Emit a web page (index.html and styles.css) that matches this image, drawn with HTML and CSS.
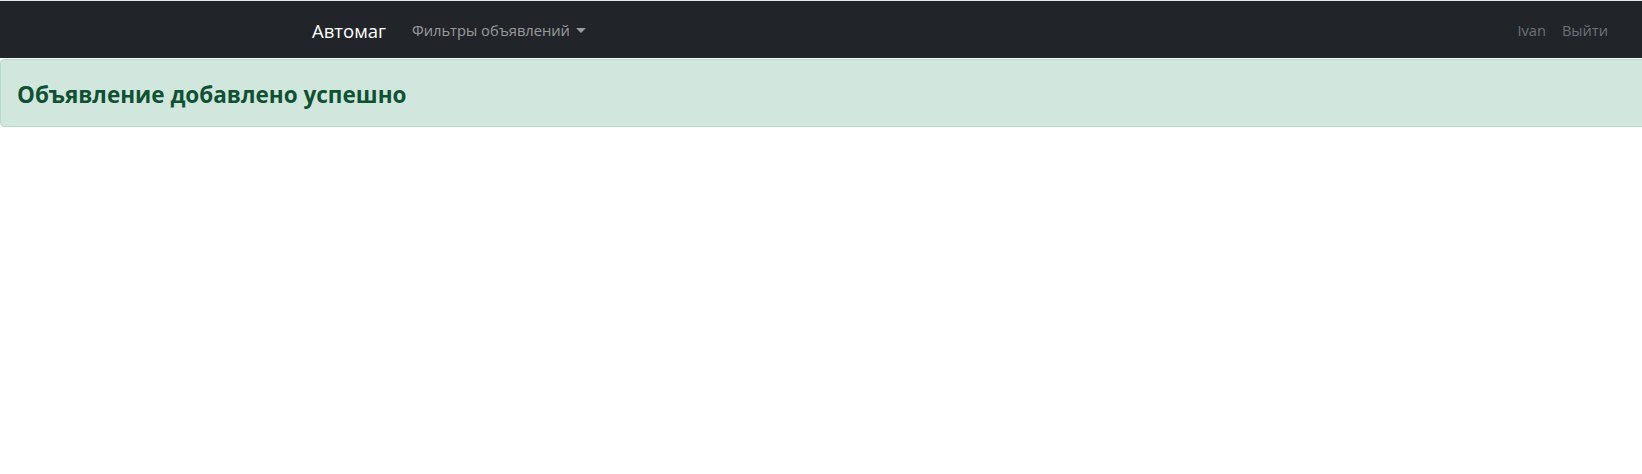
FILE: index.html
```html
<!DOCTYPE html>
<html lang="ru">
<head>
<meta charset="utf-8">
<title>Автомаг</title>
<link rel="stylesheet" href="styles.css">
</head>
<body>
<nav class="navbar">
  <div class="nav-left">
    <a class="brand" href="#">Автомаг</a>
    <a class="nav-link dropdown" href="#">Фильтры объявлений<span class="caret"></span></a>
  </div>
  <div class="nav-right">
    <span class="user">Ivan</span>
    <a class="user" href="#">Выйти</a>
  </div>
</nav>
<div class="alert">
  <h4 class="alert-heading">Объявление добавлено успешно</h4>
</div>
</body>
</html>
```
FILE: styles.css
```css
html, body {
  margin: 0;
  padding: 0;
  overflow: hidden;
  background: #fff;
}
body {
  font-family: "Open Sans", "Noto Sans", "Liberation Sans", sans-serif;
  border-top: 1px solid #e4e6e8;
}
a { text-decoration: none; }
.navbar {
  background: #212529;
  height: 57px;
  display: flex;
  align-items: center;
  justify-content: space-between;
  padding: 1px 34px 0 312px;
  box-sizing: border-box;
}
.nav-left, .nav-right {
  display: flex;
  align-items: center;
}
.brand {
  color: #fff;
  font-size: 18.5px;
  margin-right: 26px;
}
.nav-link {
  color: rgba(255,255,255,0.55);
  font-size: 14.7px;
  display: flex;
  align-items: center;
}
.caret {
  display: inline-block;
  width: 0;
  height: 0;
  margin-left: 6px;
  border-top: 5px solid rgba(255,255,255,0.55);
  border-left: 5px solid transparent;
  border-right: 5px solid transparent;
}
.user {
  color: #6d7278;
  font-size: 14.6px;
  margin-left: 16px;
}
.alert {
  background: #d1e7dd;
  border: 1px solid #badbcc;
  border-radius: 4px;
  color: #0f5132;
  margin: 1px -20px 0 0;
  height: 68px;
  box-sizing: border-box;
  display: flex;
  align-items: center;
  padding: 2px 16px 0;
}
.alert-heading {
  margin: 0;
  font-size: 22.5px;
  font-weight: 700;
}
```
